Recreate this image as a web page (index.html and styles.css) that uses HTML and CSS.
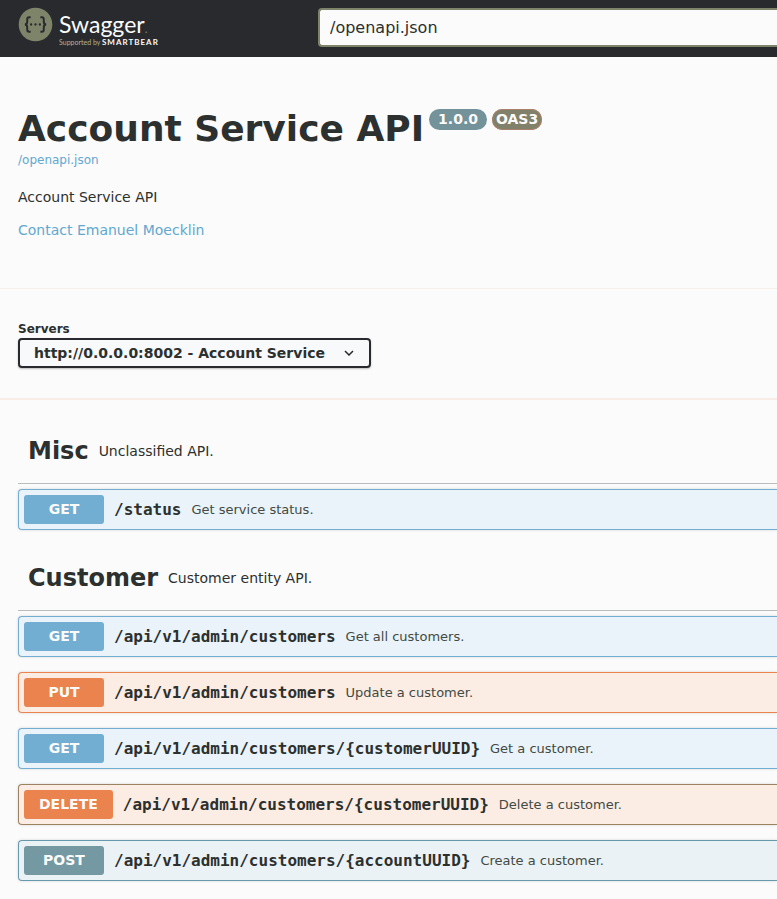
FILE: index.html
```html
<!DOCTYPE html>
<html lang="en">
<head>
<meta charset="utf-8">
<title>Account Service API</title>
<link rel="stylesheet" href="styles.css">
</head>
<body>
<header class="topbar">
  <a class="logo" href="#">
    <svg class="logo-mark" viewBox="0 0 36 36" aria-hidden="true">
      <circle cx="18" cy="18" r="17.3" fill="#7d8469"/>
      <g fill="none" stroke="#282a2d" stroke-width="2">
        <path d="M13 10.500h-1.500q-2 0-2 2v2.500q0 3-2.500 3 2.500 0 2.500 3v2.500q0 2 2 2h1.500"/>
        <path d="M23 10.500h1.500q2 0 2 2v2.500q0 3 2.500 3-2.500 0-2.500 3v2.500q0 2-2 2h-1.500"/>
      </g>
      <g fill="#282a2d">
        <circle cx="13.500" cy="18" r="1.200"/>
        <circle cx="18" cy="18" r="1.200"/>
        <circle cx="22.500" cy="18" r="1.200"/>
      </g>
    </svg>
    <span class="logo-text">
      <span class="logo-name">Swagger<span class="logo-dot">.</span></span>
      <span class="logo-by">Supported by <b>SMARTBEAR</b></span>
    </span>
  </a>
  <input class="url-input" type="text" value="/openapi.json" aria-label="Definition URL">
</header>
<main>
  <section class="info">
    <div class="title-row">
      <h1>Account Service API</h1>
      <span class="badge badge-version">1.0.0</span>
      <span class="badge badge-oas">OAS3</span>
    </div>
    <a class="spec-link" href="#">/openapi.json</a>
    <p class="description">Account Service API</p>
    <a class="contact" href="#">Contact Emanuel Moecklin</a>
  </section>
  <section class="servers">
    <label for="server">Servers</label>
    <div class="select-wrap">
      <select id="server"><option>http://0.0.0.0:8002 - Account Service</option></select>
      <svg class="chevron" viewBox="0 0 10 6" aria-hidden="true"><path d="M1 1l4 4 4-4" fill="none" stroke="#282a2d" stroke-width="1.500"/></svg>
    </div>
  </section>
  <div class="tags">
    <section>
      <div class="tag-head"><h2>Misc</h2><span>Unclassified API.</span></div>
      <div class="op get"><button class="method">GET</button><span class="path">/status</span><span class="summary">Get service status.</span></div>
    </section>
    <section>
      <div class="tag-head"><h2>Customer</h2><span>Customer entity API.</span></div>
      <div class="op get"><button class="method">GET</button><span class="path">/api/v1/admin/customers</span><span class="summary">Get all customers.</span></div>
      <div class="op put"><button class="method">PUT</button><span class="path">/api/v1/admin/customers</span><span class="summary">Update a customer.</span></div>
      <div class="op get"><button class="method">GET</button><span class="path">/api/v1/admin/customers/{customerUUID}</span><span class="summary">Get a customer.</span></div>
      <div class="op delete"><button class="method">DELETE</button><span class="path">/api/v1/admin/customers/{customerUUID}</span><span class="summary">Delete a customer.</span></div>
      <div class="op post"><button class="method">POST</button><span class="path">/api/v1/admin/customers/{accountUUID}</span><span class="summary">Create a customer.</span></div>
    </section>
  </div>
</main>
</body>
</html>
```
FILE: styles.css
```css
* { box-sizing: border-box; }

body {
  margin: 0;
  background: #fbfbfb;
  color: #2c302e;
  font: 14px/16px "DejaVu Sans", sans-serif;
}

h1, h2, p { margin: 0; }

a { color: #62a8d0; text-decoration: none; }

.topbar {
  display: flex;
  align-items: flex-start;
  padding: 7px 0 10px 18px;
  background: #282a2d;
}

.logo { display: flex; flex: 0 0 300px; gap: 6px; color: #fbfbfb; font-family: Lato, sans-serif; }
.logo-mark { width: 35px; height: 35px; }
.logo-text { display: flex; flex-direction: column; padding-top: 4px; }
.logo-name { font-size: 23px; line-height: 26px; height: 26px; }
.logo-dot { font-size: 12px; line-height: 12px; color: #7d8469; }
.logo-by { color: #b0b59c; font-size: 7px; line-height: 10px; height: 10px; }
.logo-by b { color: #fbfbfb; font-size: 8px; letter-spacing: 1px; }

.url-input {
  flex: 1;
  min-width: 0;
  height: 39px;
  margin-top: 1px;
  padding: 0 10px;
  border: 2px solid #7d8469;
  border-right: 0;
  border-radius: 4px 0 0 4px;
  background: #fbfbfb;
  color: #2c302e;
  font: 16px "DejaVu Sans", sans-serif;
}

.info { padding: 50px 0 50px 18px; }
.title-row { display: flex; align-items: flex-start; gap: 5px; }
h1 { font-size: 36px; line-height: 44px; }
.badge {
  margin-top: 2px;
  padding: 0 9px;
  border-radius: 11px;
  color: #fbfbfb;
  font-weight: bold;
  line-height: 21px;
}
.badge-version { background: #749299; }
.badge-oas { padding: 0 4px; background: #81806a; box-shadow: inset 0 0 0 1px #a9806a; }
.spec-link { display: block; font-size: 12px; line-height: 18px; }
.description { padding: 20px 0 17px; }
.contact { display: block; }

.servers {
  padding: 32px 0 30px 18px;
  border-top: 1px solid #f7efea;
  border-bottom: 2px solid #f7ece6;
}
.servers label { display: block; font-size: 12px; font-weight: bold; line-height: 17px; }
.select-wrap { position: relative; width: fit-content; }
select {
  display: block;
  height: 30px;
  padding: 0 44px 0 14px;
  appearance: none;
  border: 2px solid #282a2d;
  border-radius: 4px;
  background: #f7f9fa;
  box-shadow: 0 1px 2px rgba(0, 0, 0, 0.25);
  color: #2c302e;
  font: bold 14px "DejaVu Sans", sans-serif;
}
.chevron { position: absolute; top: 12px; right: 17px; width: 10px; height: 6px; }

.tags { padding: 3px 0 18px 18px; }
.tag-head {
  display: flex;
  align-items: center;
  gap: 10px;
  height: 66px;
  margin: 15px 0 5px;
  padding-left: 10px;
  border-bottom: 1px solid #b9bdbe;
}
h2 { font-size: 24px; line-height: 30px; }

.op {
  display: flex;
  align-items: center;
  gap: 10px;
  margin-bottom: 15px;
  padding: 5px;
  border: 1px solid;
  border-right: 0;
  border-radius: 4px 0 0 4px;
  box-shadow: 0 0 3px rgba(0, 0, 0, 0.15);
}
.method {
  min-width: 80px;
  height: 29px;
  padding: 0 15px 1px;
  border: 0;
  border-radius: 3px;
  color: #fbfbfb;
  font: bold 14px "DejaVu Sans", sans-serif;
}
.path { font: bold 16px "DejaVu Sans Mono", monospace; }
.summary { font-size: 13px; color: #424a43; }

.op.get { border-color: #71aed1; background: #e9f3f9; }
.get .method { background: #71aed1; }
.op.put { border-color: #ea834e; background: #fbece4; }
.put .method, .delete .method { background: #ea834e; }
.op.delete { border-color: #9c8260; background: #fbece4; }
.op.post { border-color: #6799ae; background: #ebf2f6; }
.post .method { background: #7499a2; }
```
